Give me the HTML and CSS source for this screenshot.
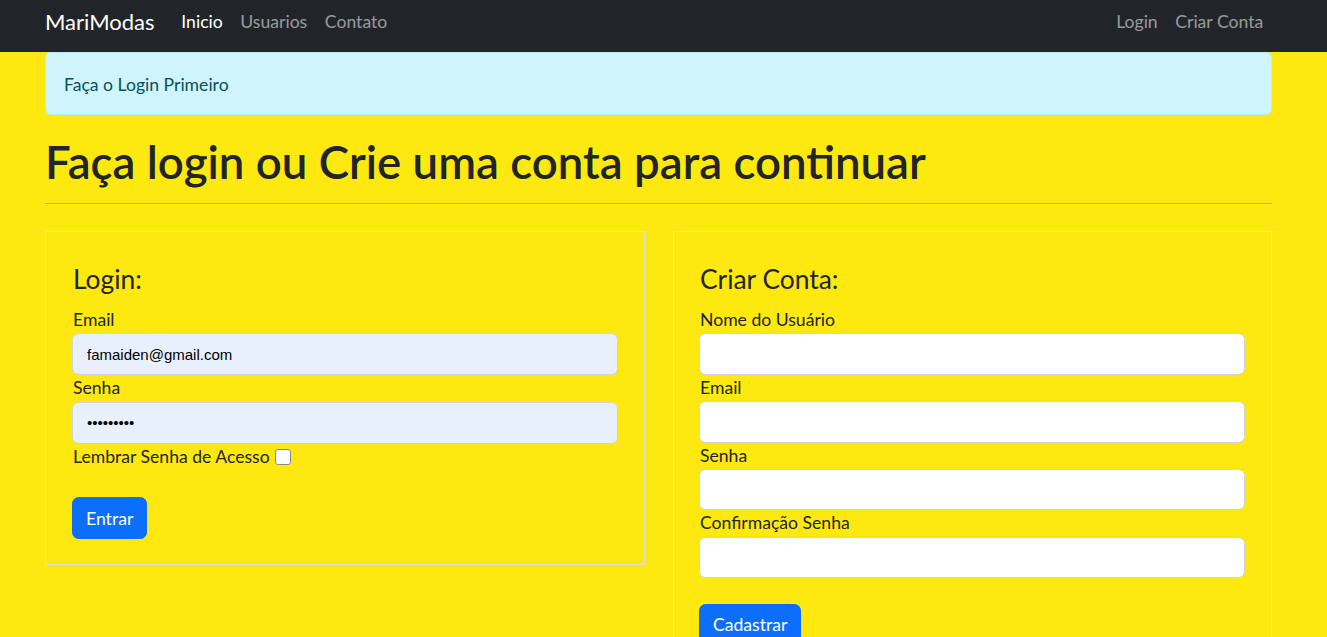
FILE: index.html
```html
<!DOCTYPE html>
<html lang="pt-BR">
<head>
<meta charset="utf-8">
<title>MariModas</title>
<link rel="stylesheet" href="styles.css">
</head>
<body>
<nav class="navbar">
  <div class="nav-inner">
    <a class="brand" href="#">MariModas</a>
    <ul class="nav-links">
      <li><a class="active" href="#">Inicio</a></li>
      <li><a href="#">Usuarios</a></li>
      <li><a href="#">Contato</a></li>
    </ul>
    <ul class="nav-links nav-right">
      <li><a href="#">Login</a></li>
      <li><a href="#">Criar Conta</a></li>
    </ul>
  </div>
</nav>
<main class="container">
  <div class="alert">Faça o Login Primeiro</div>
  <h1 class="title">Faça login ou Crie uma conta para continuar</h1>
  <hr class="divider">
  <div class="row">
    <section class="card">
      <h4 class="card-title">Login:</h4>
      <label class="label">Email</label>
      <input class="input autofill" type="email" value="famaiden@gmail.com">
      <label class="label">Senha</label>
      <input class="input autofill" type="password" value="123456789">
      <div class="check-row">
        <label class="label inline">Lembrar Senha de Acesso</label>
        <input class="check" type="checkbox">
      </div>
      <button class="btn" type="button">Entrar</button>
    </section>
    <section class="card card-tall">
      <h4 class="card-title">Criar Conta:</h4>
      <label class="label">Nome do Usuário</label>
      <input class="input" type="text">
      <label class="label">Email</label>
      <input class="input" type="email">
      <label class="label">Senha</label>
      <input class="input" type="password">
      <label class="label">Confirmação Senha</label>
      <input class="input" type="password">
      <button class="btn btn-create" type="button">Cadastrar</button>
    </section>
  </div>
</main>
</body>
</html>
```
FILE: styles.css
```css
* { box-sizing: border-box; }
html, body { margin: 0; padding: 0; }
body {
  background: #fde910;
  font-family: Lato, "Noto Sans", sans-serif;
  color: #212529;
  font-size: 17.6px;
  line-height: 26.4px;
  overflow: hidden;
  height: 637px;
}
a { text-decoration: none; }

.navbar {
  background: #212529;
  height: 52px;
}
.nav-inner {
  display: flex;
  align-items: center;
  height: 100%;
  padding: 0 55px 7px 45px;
}
.brand {
  color: #fff;
  font-size: 22px;
  margin-right: 18px;
}
.nav-links {
  list-style: none;
  margin: 0;
  padding: 0;
  display: flex;
}
.nav-links a {
  display: block;
  color: rgba(255,255,255,.55);
  padding: 0 8.8px;
}
.nav-links a.active { color: #fff; }
.nav-right { margin-left: auto; }

.container {
  width: 1227px;
  margin-left: 45px;
}
.alert {
  background: #cff4fc;
  border: 1px solid #b6effb;
  color: #055160;
  border-radius: 6px;
  padding: 18.5px 18px 16.5px 18px;
}
.title {
  font-size: 45.6px;
  line-height: 52.8px;
  font-weight: 600;
  margin: 21px 0 0 0;
}
.divider {
  border: 0;
  border-top: 1px solid rgba(33,37,41,.25);
  margin: 14px 0 27px 0;
}
.row {
  display: flex;
  gap: 28px;
  align-items: flex-start;
}
.card {
  flex: 0 0 600px;
  border: 1px solid #dcdfe0;
  padding: 32px 26px 25px 26px;
  display: flex;
  flex-direction: column;
  align-items: flex-start;
}
.card-tall {
  flex-basis: 599px;
  height: 440px;
  padding-left: 25px;
}
.card-title {
  font-size: 26.4px;
  line-height: 31.7px;
  font-weight: 400;
  margin: 0 0 11px 1px;
}
.label {
  display: block;
  line-height: 26.4px;
  margin-left: 1px;
}
.label.inline { display: inline; margin-right: 5px; }
.input {
  width: 100%;
  height: 42px;
  border: 1px solid #ced4da;
  border-radius: 6.6px;
  background: #fff;
  padding: 6px 14px;
  font-family: "Liberation Sans", Arial, sans-serif;
  font-size: 15px;
  color: #000;
}
.input.autofill { background: #e8f0fe; }
.check-row {
  display: flex;
  align-items: center;
}
.check {
  appearance: none;
  -webkit-appearance: none;
  width: 16px;
  height: 16px;
  margin: 0;
  border: 1px solid #8a8a8a;
  border-radius: 3px;
  background: #fff;
}
.btn {
  margin-top: 27px;
  background: #0d6efd;
  color: #fff;
  border: 1px solid #0d6efd;
  border-radius: 6.6px;
  height: 42px;
  padding: 0 13px;
  font-family: Lato, "Noto Sans", sans-serif;
  font-size: 17.6px;
}
.btn-create { margin-top: 26px; }
```
